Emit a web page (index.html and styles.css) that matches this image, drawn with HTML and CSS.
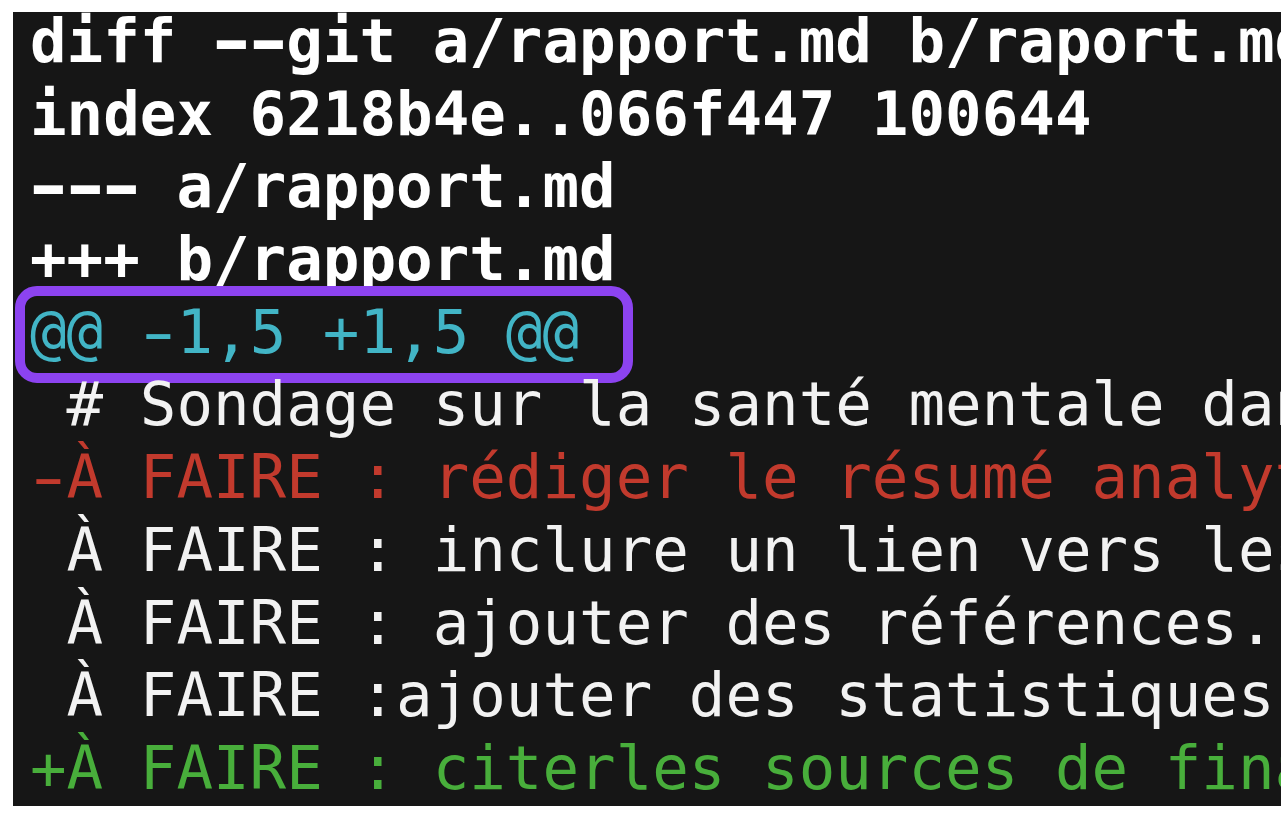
FILE: index.html
```html
<!DOCTYPE html>
<html lang="fr">
<head>
<meta charset="utf-8">
<title>git diff</title>
<link rel="stylesheet" href="styles.css">
</head>
<body>
<div class="terminal">
  <div class="code">
    <div class="line meta">diff <span class="dash">-</span><span class="dash">-</span>git a/rapport.md b/raport.md</div>
    <div class="line meta">index 6218b4e..066f447 100644</div>
    <div class="line meta"><span class="dash">-</span><span class="dash">-</span><span class="dash">-</span> a/rapport.md</div>
    <div class="line meta">+++ b/rapport.md</div>
    <div class="line hunk"><span class="hunk-text">@@ <span class="dash">-</span>1,5 +1,5 @@</span></div>
    <div class="line ctx"> # Sondage sur la santé mentale dans</div>
    <div class="line del"><span class="dash">-</span>À FAIRE : rédiger le résumé analytique</div>
    <div class="line ctx"> À FAIRE : inclure un lien vers les</div>
    <div class="line ctx"> À FAIRE : ajouter des références.</div>
    <div class="line ctx"> À FAIRE :ajouter des statistiques</div>
    <div class="line add">+À FAIRE : citerles sources de financement</div>
  </div>
</div>
</body>
</html>
```

FILE: styles.css
```css
html, body {
  margin: 0;
  padding: 0;
  background: #ffffff;
}

body {
  padding: 12px 5px 10px 13px;
  width: 1286px;
  height: 816px;
  box-sizing: border-box;
}

.terminal {
  background: #161616;
  height: 794px;
  overflow: hidden;
}

.code {
  margin-top: -7px;
  padding-left: 17px;
  font-family: "DejaVu Sans Mono", "Liberation Mono", monospace;
  font-size: 60.8px;
  line-height: 72.7px;
  color: #f4f4f4;
}

.line {
  position: relative;
  white-space: pre;
  height: 72.7px;
}

.dash {
  display: inline-block;
  transform: scaleX(1.55);
}

.meta {
  font-weight: bold;
  color: #ffffff;
}

.hunk {
  color: #42b5c6;
}

.hunk::before {
  content: "";
  position: absolute;
  left: -15px;
  top: -10px;
  width: 618px;
  height: 97px;
  box-sizing: border-box;
  border: 10px solid #8c43f0;
  border-radius: 22px;
}

.ctx {
  color: #f2f2f2;
}

.del {
  color: #c23a2d;
}

.add {
  color: #48ae3b;
}
```
